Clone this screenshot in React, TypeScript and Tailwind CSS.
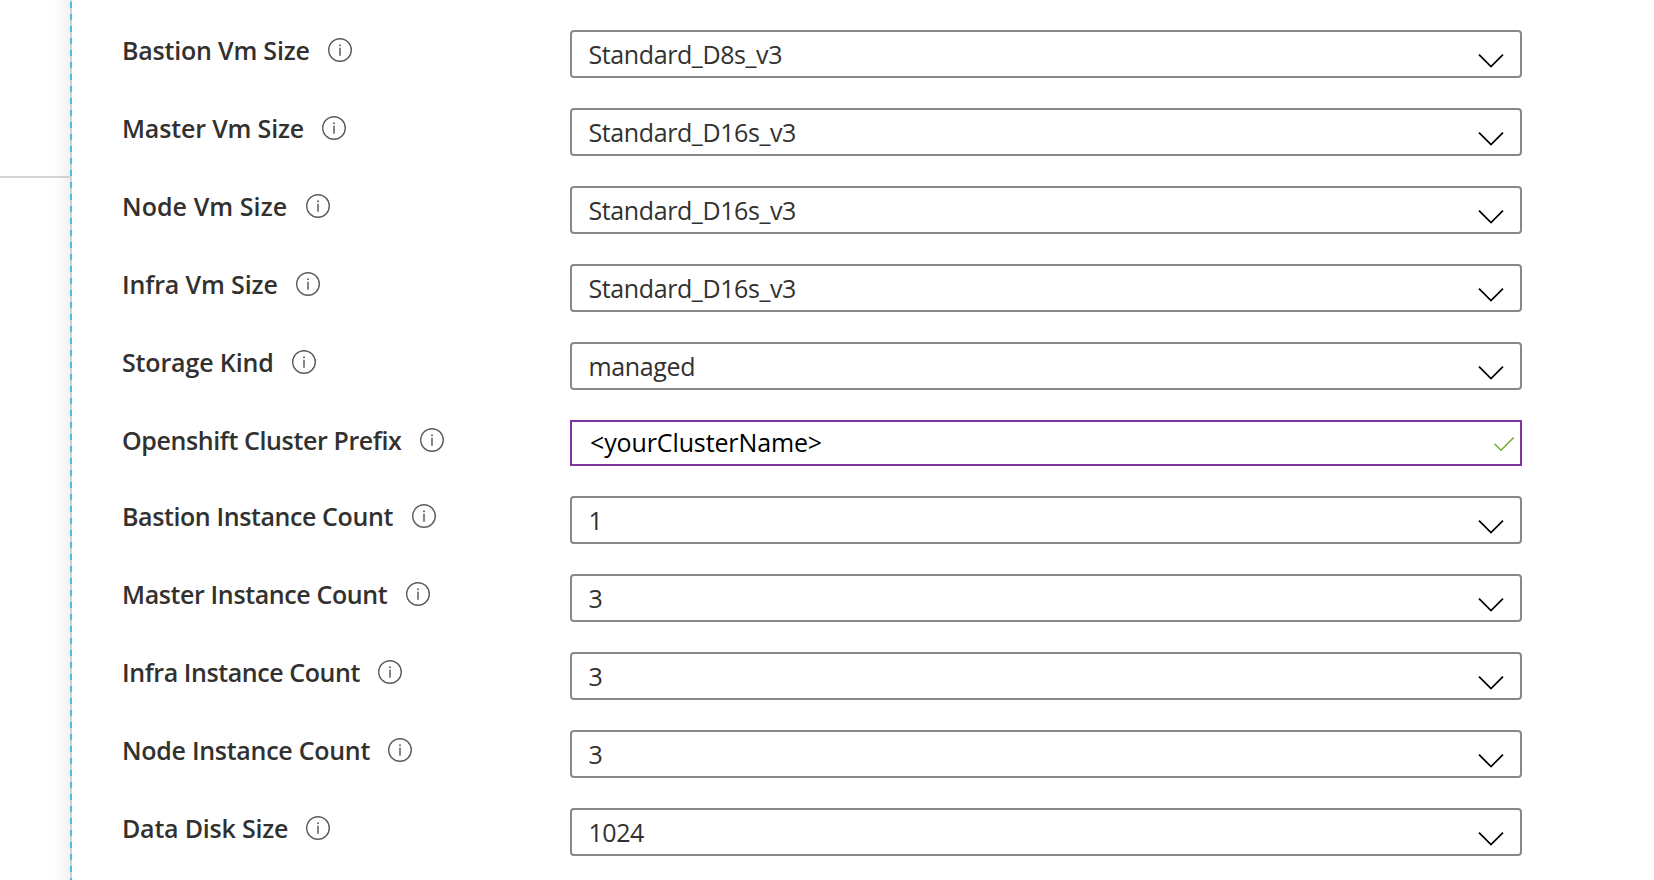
type Field = {
  label: string;
  labelClass: string;
  value: string;
  valueClass?: string;
  kind?: "text";
};

const fields: Field[] = [
  { label: "Bastion Vm Size", labelClass: "w-[206px] tracking-[-0.2px]", value: "Standard_D8s_v3", valueClass: "tracking-[-0.4px]" },
  { label: "Master Vm Size", labelClass: "w-[200px] tracking-[-0.16px]", value: "Standard_D16s_v3", valueClass: "tracking-[-0.4px]" },
  { label: "Node Vm Size", labelClass: "w-[184px] tracking-[0.07px]", value: "Standard_D16s_v3", valueClass: "tracking-[-0.4px]" },
  { label: "Infra Vm Size", labelClass: "w-[174px] tracking-[-0.13px]", value: "Standard_D16s_v3", valueClass: "tracking-[-0.4px]" },
  { label: "Storage Kind", labelClass: "w-[170px] tracking-[-0.14px]", value: "managed", valueClass: "tracking-[-0.35px]" },
  { label: "Openshift Cluster Prefix", labelClass: "w-[298px] tracking-[-0.39px]", value: "<yourClusterName>", kind: "text" },
  { label: "Bastion Instance Count", labelClass: "w-[290px] tracking-[-0.4px]", value: "1" },
  { label: "Master Instance Count", labelClass: "w-[284px] tracking-[-0.38px]", value: "3" },
  { label: "Infra Instance Count", labelClass: "w-[256px] tracking-[-0.42px]", value: "3" },
  { label: "Node Instance Count", labelClass: "w-[266px] tracking-[-0.28px]", value: "3" },
  { label: "Data Disk Size", labelClass: "w-[184px] tracking-[-0.2px]", value: "1024", valueClass: "tracking-[-0.45px]" },
];

function InfoIcon() {
  return (
    <svg className="mt-2 size-6 shrink-0" viewBox="0 0 24 24" fill="none">
      <circle cx="12" cy="12" r="11.3" stroke="#5c5b5a" strokeWidth="1.4" />
      <circle cx="12" cy="7.3" r="0.95" fill="#5c5b5a" />
      <path d="M12 9.7V17.7" stroke="#5c5b5a" strokeWidth="1.5" />
    </svg>
  );
}

function Chevron() {
  return (
    <svg className="mt-[22px] mr-4 h-4 w-[26px] shrink-0" viewBox="0 0 26 16" fill="none">
      <path d="M1 0.6L13 12.6L25 0.6" stroke="#000" strokeWidth="1.7" />
    </svg>
  );
}

function Check() {
  return (
    <svg className="mt-[14px] mr-[5px] h-4 w-[22px] shrink-0" viewBox="0 0 22 16" fill="none">
      <path d="M1.5 7.8L8 14.2L20.7 1.5" stroke="#6fae32" strokeWidth="1.6" />
    </svg>
  );
}

function Row({ field }: { field: Field }) {
  return (
    <div className="flex items-start">
      <div className="flex w-[448px] shrink-0 items-start">
        <span className={`mt-[3px] font-[640] whitespace-nowrap text-[#323130] ${field.labelClass}`}>{field.label}</span>
        <InfoIcon />
      </div>
      {field.kind === "text" ? (
        <div className="flex h-[46px] w-[952px] items-start justify-between border-2 border-[#8036a0] bg-white pl-[18px]">
          <span className="mt-[3px] tracking-[-0.12px] text-black">{field.value}</span>
          <Check />
        </div>
      ) : (
        <div className="flex h-12 w-[952px] items-start justify-between rounded-[4px] border-2 border-[#898887] bg-white pl-[16.5px]">
          <span className={`mt-[5px] text-[#323130] ${field.valueClass ?? ""}`}>{field.value}</span>
          <Chevron />
        </div>
      )}
    </div>
  );
}

export default function App() {
  return (
    <div className="flex h-[880px] w-[1654px] overflow-hidden bg-white font-['Open_Sans','Noto_Sans',sans-serif] text-[25px] leading-[34px]">
      <aside className="flex w-[70px] shrink-0 flex-col bg-[linear-gradient(to_right,#ffffff_52px,#fbfbfb_60px,#f1f1f1_70px)]">
        <div className="h-[178px] border-b-2 border-[#d2d2d2]" />
      </aside>
      <div className="w-0.5 shrink-0 bg-[repeating-linear-gradient(to_bottom,#d4d2d0_0px,#d4d2d0_2px,#4fb9ee_2px,#4fb9ee_8px,#d4d2d0_8px,#d4d2d0_12px)]" />
      <main className="flex flex-col gap-[30px] pt-[30px] pl-[50px]">
        {fields.map((field) => (
          <Row key={field.label} field={field} />
        ))}
      </main>
    </div>
  );
}
